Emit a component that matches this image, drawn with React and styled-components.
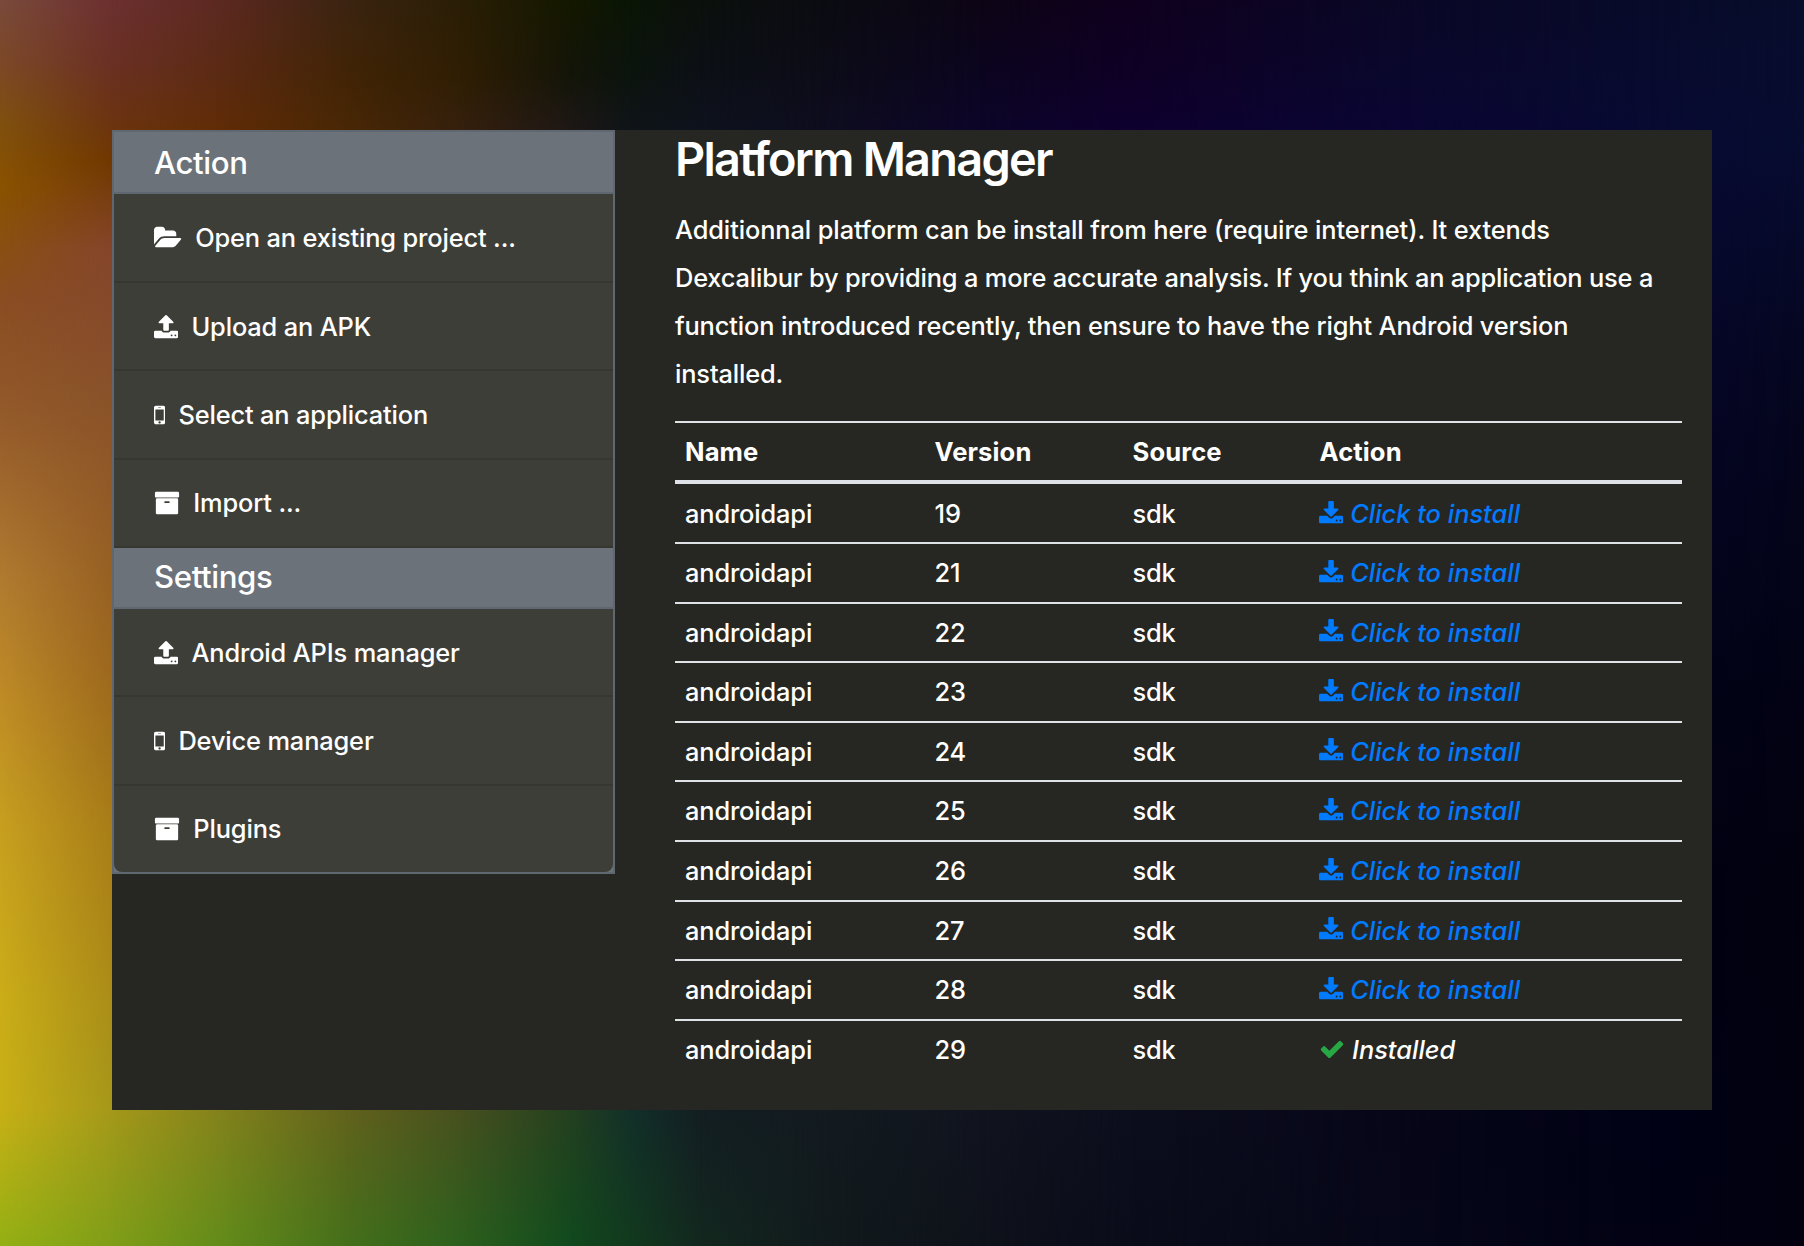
import React from "react";
import styled, { createGlobalStyle } from "styled-components";

const GlobalStyle = createGlobalStyle`
  *, *::before, *::after { box-sizing: border-box; }
  body {
    margin: 0;
    background: #05051a;
    color: #fff;
    font-family: Inter, "Liberation Sans", sans-serif;
    font-size: 25.4px;
    font-weight: 500;
    letter-spacing: -0.15px;
    -webkit-font-smoothing: antialiased;
  }
`;

/* Colour wash: vertical gradients at increasing x, each fading in over the last. */
const WASH = [
  [0, ["#7a4a3b 0", "#7c4828 5%", "#80500e 10%", "#8a5200 15%", "#8a4d22 24%", "#935a2a 33%", "#b07a30 46%", "#bf8c26 56%", "#c79f20 66%", "#cbad18 80%", "#c8b016 89%", "#94b014 100%"]],
  [112, ["#6c3030 0", "#6a3024 5%", "#6c3410 10%", "#703800 13%", "#84452c 20%", "#88502a 30%", "#935c26 42%", "#9c681e 54%", "#a87c18 66%", "#ab8a18 78%", "#a5981a 89%", "#7f9e18 100%"]],
  [230, ["#5a2820 0", "#5a2a12 6%", "#5f2b04 11%", "#80801c 89%", "#608a1a 100%"]],
  [345, ["#3b2412 0", "#422406 6%", "#4a2805 11%", "#62621c 89%", "#45701b 100%"]],
  [460, ["#2a1e06 0", "#2f1e03 6%", "#36200f 11%", "#47501f 89%", "#2c601d 100%"]],
  [570, ["#141800 0", "#141509 6%", "#1f1817 11%", "#24401f 89%", "#114a1e 100%"]],
  [630, ["#0a1505 0", "#0c140e 6%", "#10141a 11%", "#12302a 89%", "#123a1e 100%"]],
  [700, ["#0c100c 0", "#0c1016 6%", "#0e131e 11%", "#131e22 89%", "#13281f 100%"]],
  [820, ["#0b0c12 0", "#0d0c18 6%", "#0e0d20 11%", "#131b20 89%", "#111a1c 100%"]],
  [980, ["#0d0515 0", "#0c0520 6%", "#0d052a 11%", "#11141f 89%", "#0e121a 100%"]],
  [1130, ["#10001e 0", "#0f0026 6%", "#0e0030 11%", "#0c0e1d 89%", "#0a0c1a 100%"]],
  [1400, ["#0a0726 0", "#0a072d 6%", "#0a0534 11%", "#070619 89%", "#060718 100%"]],
  [1650, ["#080b2a 0", "#080b2e 6%", "#080a33 11%", "#06062a 30%", "#030318 55%", "#010113 75%", "#010216 89%", "#020214 100%"]],
  [1804, ["#080d2c 0", "#070c30 12%", "#05061f 30%", "#030317 50%", "#01010f 70%", "#010110 100%"]],
].map(([x, stops], i, all) => ({ x, stops: stops.join(", "), from: i ? all[i - 1][0] : 0 }));

const Stage = styled.div`
  display: grid;
  width: 1804px;
  height: 1246px;
  overflow: hidden;
`;

const Wash = styled.div`
  grid-area: 1 / 1;
  background: linear-gradient(to bottom, ${(p) => p.$stops});
  ${(p) =>
    p.$to > 0 &&
    `mask-image: linear-gradient(to right, transparent ${p.$from}px, #000 ${p.$to}px);`}
`;

const Window = styled.main`
  grid-area: 1 / 1;
  z-index: 1;
  display: flex;
  align-items: flex-start;
  width: 1600px;
  height: 980px;
  margin: 130px 0 0 112px;
  background: #262722;
`;

const Sidebar = styled.nav`
  width: 503px;
  flex: none;
  border: 2px solid #5f6770;
  background: #6b7279;
`;

const SectionTitle = styled.h2`
  height: ${(p) => p.$height}px;
  margin: 0;
  padding: 0 40px;
  border-bottom: 2px solid #5f6770;
  font-size: 31.2px;
  font-weight: 500;
  line-height: ${(p) => p.$line}px;
  letter-spacing: -0.4px;
`;

const MenuList = styled.ul`
  margin: 0;
  padding: 0;
  list-style: none;
  border-radius: 0 0 ${(p) => (p.$rounded ? "8px 8px" : "0 0")};
  background: #3e3e38;
`;

const MenuItem = styled.li`
  height: ${(p) => p.$height}px;
  padding: 0 40px;
  border-bottom: 2px solid #363731;
  line-height: ${(p) => p.$line}px;
  white-space: nowrap;

  ${MenuList} &:last-child { ${(p) => p.$last && "border-bottom: 0;"} }
`;

const Glyph = styled.svg`
  display: inline-block;
  height: 26px;
  width: ${(p) => p.$width}px;
  margin-right: ${(p) => p.$gap}px;
  vertical-align: -3.7px;
  fill: currentColor;
`;

const Content = styled.section`
  width: 1007px;
  margin-left: 60px;
`;

const Heading = styled.h1`
  margin: 0;
  height: 76px;
  font-size: 46.8px;
  font-weight: 600;
  line-height: 58px;
  letter-spacing: -1.7px;
`;

const Intro = styled.p`
  margin: 0 0 23px;
  line-height: 48px;
`;

const Line = styled.span`
  display: block;
  white-space: nowrap;
  letter-spacing: ${(p) => p.$spacing}px;
`;

const Table = styled.div`
  border-top: 2px solid #dee2e6;
`;

const Row = styled.div`
  display: grid;
  grid-template-columns: 249.5px 198px 187px 1fr;
  height: 59.6px;
  border-top: 2px solid #dee2e6;
  line-height: 58px;

  &:nth-child(2) {
    height: 58px;
    border-top: 0;
    line-height: 60px;
  }
`;

const HeadRow = styled(Row)`
  height: 61px;
  border-top: 0;
  border-bottom: 4px solid #dee2e6;
  font-size: 25.6px;
  font-weight: 700;
  letter-spacing: 0.12px;
`;

const Cell = styled.div`
  padding: 0 10px;
  white-space: nowrap;
`;

const Status = styled.em`
  margin-left: -0.7px;
  letter-spacing: 0;
  color: ${(p) => (p.$link ? "#007bff" : "#fff")};
`;

const Tick = styled.span`
  color: #28a745;
`;

const ICONS = {
  folder: {
    box: "0 0 1920 1792",
    d: "M1879 952q0 31-31 66l-336 396q-43 51-120.5 86.5t-143.5 35.5h-1088q-34 0-60.5-13t-26.5-43q0-31 31-66l336-396q43-51 120.5-86.5t143.5-35.5h1088q34 0 60.5 13t26.5 43zm-343-344v160h-832q-94 0-197 47.5t-164 119.5l-337 396-5 6q0-4-.5-12.5t-.5-12.5v-960q0-92 66-158t158-66h320q92 0 158 66t66 158v32h544q92 0 158 66t66 158z",
  },
  upload: {
    box: "64 0 1664 1792",
    d: "M1344 1472q0-26-19-45t-45-19-45 19-19 45 19 45 45 19 45-19 19-45zm256 0q0-26-19-45t-45-19-45 19-19 45 19 45 45 19 45-19 19-45zm128-224v320q0 40-28 68t-68 28h-1472q-40 0-68-28t-28-68v-320q0-40 28-68t68-28h427q21 56 70.5 92t110.5 36h256q61 0 110.5-36t70.5-92h427q40 0 68 28t28 68zm-325-648q-17 40-59 40h-256v448q0 26-19 45t-45 19h-256q-26 0-45-19t-19-45v-448h-256q-42 0-59-40-17-39 14-69l448-448q18-19 45-19t45 19l448 448q31 30 14 69z",
  },
  download: {
    box: "64 0 1664 1792",
    d: "M1344 1344q0-26-19-45t-45-19-45 19-19 45 19 45 45 19 45-19 19-45zm256 0q0-26-19-45t-45-19-45 19-19 45 19 45 45 19 45-19 19-45zm128-224v320q0 40-28 68t-68 28h-1472q-40 0-68-28t-28-68v-320q0-40 28-68t68-28h465l135 136q58 56 136 56t136-56l136-136h464q40 0 68 28t28 68zm-325-569q17 41-14 70l-448 448q-18 19-45 19t-45-19l-448-448q-31-29-14-70 17-39 59-39h256v-448q0-26 19-45t45-19h256q26 0 45 19t19 45v448h256q42 0 59 39z",
  },
  mobile: {
    box: "512 0 768 1792",
    d: "M976 1408q0-33-23.5-56.5t-56.5-23.5-56.5 23.5-23.5 56.5 23.5 56.5 56.5 23.5 56.5-23.5 23.5-56.5zm208-160v-704q0-13-9.5-22.5t-22.5-9.5h-512q-13 0-22.5 9.5t-9.5 22.5v704q0 13 9.5 22.5t22.5 9.5h512q13 0 22.5-9.5t9.5-22.5zm-192-848q0-16-16-16h-160q-16 0-16 16t16 16h160q16 0 16-16zm288-16v1024q0 52-38 90t-90 38h-512q-52 0-90-38t-38-90v-1024q0-52 38-90t90-38h512q52 0 90 38t38 90z",
  },
  archive: {
    box: "0 0 1792 1792",
    d: "M1088 832q0-26-19-45t-45-19h-256q-26 0-45 19t-19 45 19 45 45 19h256q26 0 45-19t19-45zm576-192v960q0 26-19 45t-45 19h-1408q-26 0-45-19t-19-45v-960q0-26 19-45t45-19h1408q26 0 45 19t19 45zm64-448v256q0 26-19 45t-45 19h-1536q-26 0-45-19t-19-45v-256q0-26 19-45t45-19h1536q26 0 45 19t19 45z",
  },
  check: {
    box: "0 0 1792 1792",
    d: "M1671 566q0 40-28 68l-724 724-136 136q-28 28-68 28t-68-28l-136-136-362-362q-28-28-28-68t28-68l136-136q28-28 68-28t68 28l294 295 656-657q28-28 68-28t68 28l136 136q28 28 28 68z",
  },
};

function Icon({ name, gap }) {
  const { box, d } = ICONS[name];
  const width = (Number(box.split(" ")[2]) / 1792) * 26;
  return (
    <Glyph viewBox={box} $width={width} $gap={gap} aria-hidden="true">
      <path d={d} />
    </Glyph>
  );
}

const ACTIONS = [
  { icon: "folder", label: "Open an existing project ...", height: 89, line: 88 },
  { icon: "upload", label: "Upload an APK", height: 88, line: 88 },
  { icon: "mobile", label: "Select an application", height: 89, line: 88 },
  { icon: "archive", label: "Import ...", height: 88, line: 86 },
];

const SETTINGS = [
  { icon: "upload", label: "Android APIs manager", height: 88, line: 88 },
  { icon: "mobile", label: "Device manager", height: 89, line: 88 },
  { icon: "archive", label: "Plugins", height: 86, line: 86 },
];

const VERSIONS = [19, 21, 22, 23, 24, 25, 26, 27, 28, 29];

function Menu({ items, rounded }) {
  return (
    <MenuList $rounded={rounded}>
      {items.map(({ icon, label, height, line }) => (
        <MenuItem key={label} $height={height} $line={line} $last={rounded}>
          <Icon name={icon} gap={13.3} />
          {label}
        </MenuItem>
      ))}
    </MenuList>
  );
}

export default function App() {
  return (
    <>
      <GlobalStyle />
      <Stage>
        {WASH.map((w) => (
          <Wash key={w.x} $stops={w.stops} $from={w.from} $to={w.x} />
        ))}
        <Window>
          <Sidebar>
            <SectionTitle $height={62} $line={62}>Action</SectionTitle>
            <Menu items={ACTIONS} />
            <SectionTitle $height={61} $line={58}>Settings</SectionTitle>
            <Menu items={SETTINGS} rounded />
          </Sidebar>
          <Content>
            <Heading>Platform Manager</Heading>
            <Intro>
              <Line $spacing={-0.11}>Additionnal platform can be install from here (require internet). It extends </Line>
              <Line $spacing={-0.18}>Dexcalibur by providing a more accurate analysis. If you think an application use a </Line>
              <Line $spacing={-0.15}>function introduced recently, then ensure to have the right Android version </Line>
              <Line $spacing={-0.15}>installed.</Line>
            </Intro>
            <Table>
              <HeadRow>
                <Cell>Name</Cell>
                <Cell>Version</Cell>
                <Cell>Source</Cell>
                <Cell>Action</Cell>
              </HeadRow>
              {VERSIONS.map((v) => (
                <Row key={v}>
                  <Cell>androidapi</Cell>
                  <Cell>{v}</Cell>
                  <Cell>sdk</Cell>
                  <Cell>
                    {v === 29 ? (
                      <Status>
                        <Tick><Icon name="check" gap={7.2} /></Tick>
                        Installed
                      </Status>
                    ) : (
                      <Status $link>
                        <Icon name="download" gap={7.2} />
                        Click to install
                      </Status>
                    )}
                  </Cell>
                </Row>
              ))}
            </Table>
          </Content>
        </Window>
      </Stage>
    </>
  );
}
